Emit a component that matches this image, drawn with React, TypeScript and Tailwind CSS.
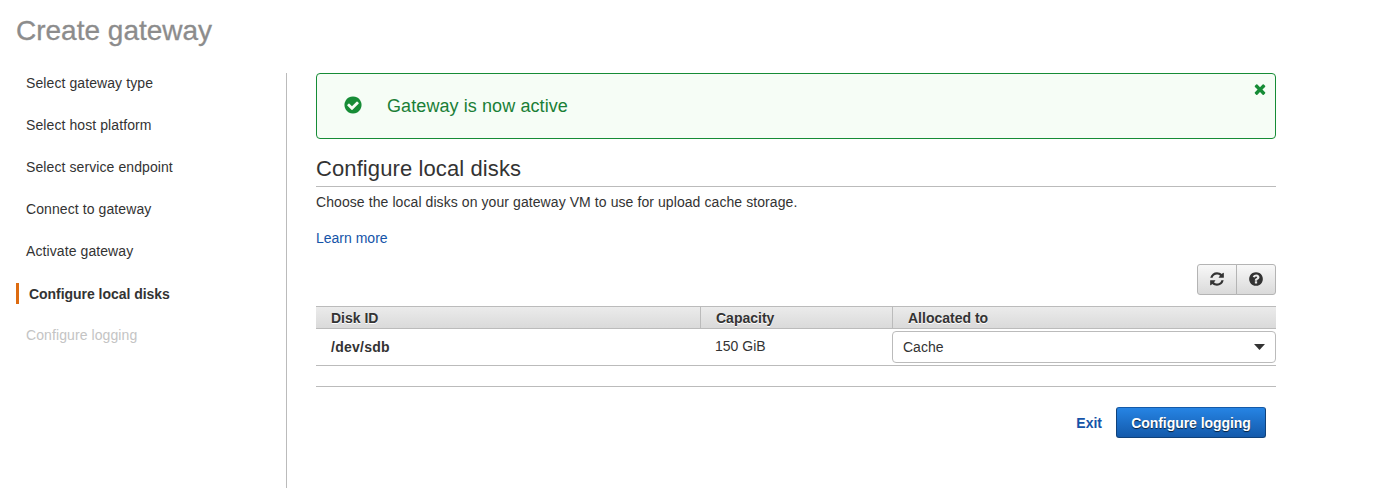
import type { ReactNode } from "react";

const CIRCLE =
  "M1664 896q0 209-103 385.5t-279.5 279.5-385.5 103-385.5-103-279.5-279.5-103-385.5 103-385.5 279.5-279.5 385.5-103 385.5 103 279.5 279.5 103 385.5z";

const ICONS = {
  check:
    "M1412 734q0-28-18-46l-91-90q-19-19-45-19t-45 19l-408 407-226-226q-19-19-45-19t-45 19l-91 90q-18 18-18 46 0 27 18 45l362 362q19 19 45 19 27 0 46-19l543-543q18-18 18-45z" +
    CIRCLE,
  close:
    "M1490 1322q0 40-28 68l-136 136q-28 28-68 28t-68-28l-294-294-294 294q-28 28-68 28t-68-28l-136-136q-28-28-28-68t28-68l294-294-294-294q-28-28-28-68t28-68l136-136q28-28 68-28t68 28l294 294 294-294q28-28 68-28t68 28l136 136q28 28 28 68t-28 68l-294 294 294 294q28 28 28 68z",
  refresh:
    "M1639 1056q0 5-1 7-64 268-268 434.5t-478 166.5q-146 0-282.5-55t-243.5-157l-129 129q-19 19-45 19t-45-19-19-45v-448q0-26 19-45t45-19h448q26 0 45 19t19 45-19 45l-137 137q71 66 161 102t187 36q134 0 250-65t186-179q11-17 53-117 8-23 30-23h192q13 0 22.5 9.5t9.5 22.5zm25-800v448q0 26-19 45t-45 19h-448q-26 0-45-19t-19-45 19-45l138-138q-148-137-349-137-134 0-250 65t-186 179q-11 17-53 117-8 23-30 23h-199q-13 0-22.5-9.5t-9.5-22.5v-7q65-268 270-434.5t480-166.5q146 0 284 55.5t245 156.5l130-129q19-19 45-19t45 19 19 45z",
  help:
    "M1024 1376v-192q0-14-9-23t-23-9h-192q-14 0-23 9t-9 23v192q0 14 9 23t23 9h192q14 0 23-9t9-23zm256-672q0-88-55.5-163t-138.5-116-170-41q-243 0-371 213-15 24 8 42l132 100q7 6 19 6 16 0 25-12 53-68 86-92 34-24 86-24 48 0 85.5 26t37.5 59q0 38-20 61t-68 45q-63 28-115.5 86.5t-52.5 125.5v36q0 14 9 23t23 9h192q14 0 23-9t9-23q0-19 21.5-49.5t54.5-49.5q32-18 49-28.5t46-35 44.5-48 28-60.5 12.5-81z" +
    CIRCLE,
};

function Icon({ name, className }: { name: keyof typeof ICONS; className: string }) {
  return (
    <svg viewBox="0 0 1792 1792" className={className} fill="currentColor" fillRule="evenodd" aria-hidden="true">
      <path d={ICONS[name]} />
    </svg>
  );
}

const doneSteps = [
  "Select gateway type",
  "Select host platform",
  "Select service endpoint",
  "Connect to gateway",
  "Activate gateway",
];

function Steps() {
  return (
    <nav className="w-[286px] shrink-0 pl-4 tracking-[0.09px]">
      {doneSteps.map((step) => (
        <div key={step} className="h-[42px] pl-2.5 leading-5">
          {step}
        </div>
      ))}
      <div className="mb-[21px] h-[21px] border-l-3 border-[#dd6b10] pl-2.5 leading-[23px] font-bold tracking-[-0.04px]">
        Configure local disks
      </div>
      <div className="pl-2.5 leading-5 text-[#c4c4c4]">Configure logging</div>
    </nav>
  );
}

function ToolButton({ children, label, className }: { children: ReactNode; label: string; className: string }) {
  return (
    <button
      aria-label={label}
      className={`flex h-[31px] items-center justify-center border border-[#b4b4b4] bg-linear-to-b from-[#f8f8f8] to-[#dadada] ${className}`}
    >
      {children}
    </button>
  );
}

function Alert() {
  return (
    <div className="flex h-[66px] items-center rounded-[4px] border border-[#168c36] bg-[#f6fdf6] pl-[26px] text-[#168c36]">
      <Icon name="check" className="mb-0.5 size-5" />
      <span className="ml-6 grow text-[18px] tracking-[0.09px] text-[#1a7f37]">Gateway is now active</span>
      <button aria-label="Dismiss" className="mt-[7px] mr-[7px] self-start">
        <Icon name="close" className="size-4" />
      </button>
    </div>
  );
}

export default function App() {
  return (
    <div className="flex h-[488px] flex-col overflow-hidden bg-white font-['Liberation_Sans',Arial,sans-serif] text-[14px] text-[#333]">
      <h1 className="h-[73px] shrink-0 pt-[13px] pl-4 text-[28px] leading-9 text-[#8c8c8c] [-webkit-text-stroke:0.3px_#8c8c8c]">
        Create gateway
      </h1>
      <div className="flex grow">
        <Steps />
        <main className="w-[990px] border-l border-[#bbb] pl-[29px]">
          <Alert />
          <h2 className="h-[48px] border-b border-[#bbb] pt-4 text-[22px] leading-7 tracking-[0.1px]">
            Configure local disks
          </h2>
          <p className="mt-[5px] leading-5 tracking-[0.08px]">
            Choose the local disks on your gateway VM to use for upload cache storage.
          </p>
          <a className="mt-4 block leading-5 text-[#1554a8]">Learn more</a>
          <div className="mt-4 flex justify-end">
            <ToolButton label="Refresh" className="w-10 rounded-l-[3px]">
              <Icon name="refresh" className="mb-px size-4" />
            </ToolButton>
            <ToolButton label="Help" className="-ml-px w-10 rounded-r-[3px]">
              <Icon name="help" className="mb-px size-4" />
            </ToolButton>
          </div>
          <div className="mt-[11px] grid h-[23px] grid-cols-[384px_192px_384px] border-y border-[#bbb] bg-linear-to-b from-[#ebebeb] to-[#dadada] leading-[22px] font-bold [text-shadow:0_1px_0_#fff]">
            <div className="pl-[15px]">Disk ID</div>
            <div className="border-l border-[#bbb] pl-[15px]">Capacity</div>
            <div className="border-l border-[#bbb] pl-[15px]">Allocated to</div>
          </div>
          <div className="grid h-[37px] grid-cols-[384px_192px_384px] border-b border-[#bbb] pt-[2px]">
            <div className="pl-[15px] leading-8 font-bold tracking-[0.25px]">/dev/sdb</div>
            <div className="pl-[15px] leading-[30px]">150 GiB</div>
            <div className="flex h-8 items-center justify-between rounded-[4px] border border-[#bbb] pr-[10px] pl-[10px]">
              Cache
              <svg viewBox="0 0 11 6" className="h-[6px] w-[11px]" fill="#333">
                <path d="M0 0h11L5.5 6z" />
              </svg>
            </div>
          </div>
          <div className="mt-5 flex items-center justify-end border-t border-[#bbb] pt-5 pr-[10px] font-bold">
            <a className="mt-0.5 mr-[14px] text-[#1554a8]">Exit</a>
            <button className="h-[31px] w-[150px] rounded-[3px] border border-[#10427b] border-t-[#145aa8] bg-linear-to-b from-[#2684e4] to-[#145aab] pt-0.5 tracking-[-0.05px] text-white [text-shadow:0_1px_1px_rgba(0,0,0,0.7)]">
              Configure logging
            </button>
          </div>
        </main>
      </div>
    </div>
  );
}
